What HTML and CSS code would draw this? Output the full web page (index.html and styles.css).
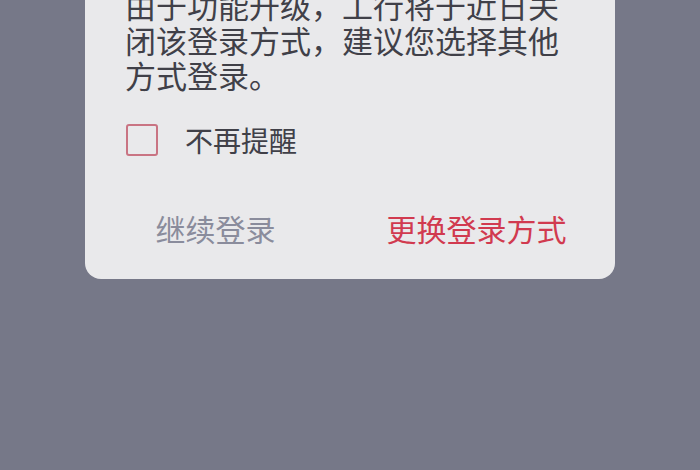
FILE: index.html
```html
<!DOCTYPE html>
<html lang="zh-CN">
<head>
<meta charset="utf-8">
<link rel="stylesheet" href="styles.css">
</head>
<body>
<div class="dialog">
  <p class="message">由于功能升级，工行将于近日关<br>闭该登录方式，建议您选择其他<br>方式登录。</p>
  <label class="remind">
    <span class="box"></span>
    <span class="remind-text">不再提醒</span>
  </label>
  <div class="actions">
    <span class="btn btn-continue">继续登录</span>
    <span class="btn btn-switch">更换登录方式</span>
  </div>
</div>
</body>
</html>
```
FILE: styles.css
```css
html, body {
  margin: 0;
  padding: 0;
  height: 100%;
}
body {
  background: #767888;
  font-family: "Noto Sans CJK SC", "Noto Sans", sans-serif;
  overflow: hidden;
}
.dialog {
  width: 530px;
  margin: -30px 0 0 85px;
  padding-top: 17px;
  background: #e9e9eb;
  border-radius: 0 0 16px 16px;
  box-sizing: border-box;
}
.message {
  margin: 0;
  padding: 0 40px;
  font-size: 31px;
  line-height: 35px;
  color: #404048;
}
.remind {
  display: flex;
  align-items: center;
  gap: 27px;
  height: 40px;
  margin: 28px 0 0 41px;
}
.box {
  width: 28px;
  height: 28px;
  border: 2px solid #c97483;
  border-radius: 3px;
  flex: none;
}
.remind-text {
  font-size: 28px;
  color: #404048;
}
.actions {
  display: flex;
  height: 60px;
  margin-top: 38px;
  padding-bottom: 21px;
  align-items: center;
}
.btn {
  flex: 1;
  text-align: center;
  font-size: 30px;
}
.btn-continue {
  color: #8a8c9c;
}
.btn-switch {
  color: #d13a4f;
  padding-right: 8px;
}
```
